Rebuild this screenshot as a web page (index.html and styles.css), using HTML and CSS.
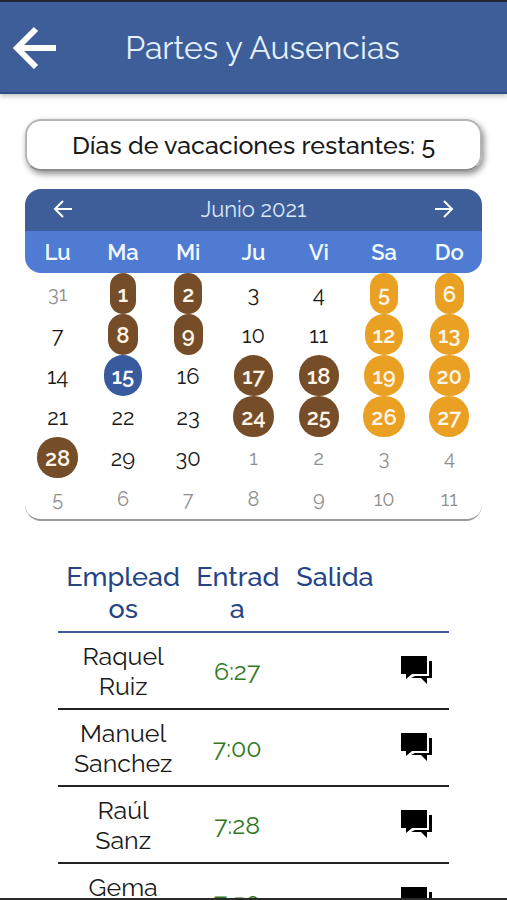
FILE: index.html
```html
<!DOCTYPE html>
<html lang="es">
<head>
    <meta charset="UTF-8">
    <meta name="viewport" content="width=device-width, initial-scale=1.0">
    <title>Partes y Ausencias</title>
    <link rel="stylesheet" href="styles.css">
</head>
<body>
    <svg class="sprite" aria-hidden="true">
        <symbol id="icon-chat" viewBox="0 0 32 29">
            <path d="M1 1h26v18H12l-6 5v-5H1z"/>
            <path d="M29 6h3v17h-5v6l-6-6H11l4-2h14z"/>
        </symbol>
    </svg>

    <div class="app">
        <header class="header">
            <button type="button" class="header__back" aria-label="Volver">
                <svg width="44" height="44" viewBox="0 0 44 44"><path d="M23 4 4 23l19 19M4 23h39"/></svg>
            </button>
            <h1 class="header__title">Partes y Ausencias</h1>
        </header>

        <main class="content">
            <p class="balance">Días de vacaciones restantes: 5</p>

            <section class="calendar">
                <div class="calendar__nav">
                    <button type="button" class="calendar__arrow" aria-label="Mes anterior">
                        <svg width="20" height="20" viewBox="0 0 20 20"><path d="M10 2 2 10l8 8M2 10h17"/></svg>
                    </button>
                    <h2 class="calendar__month">Junio 2021</h2>
                    <button type="button" class="calendar__arrow" aria-label="Mes siguiente">
                        <svg width="20" height="20" viewBox="0 0 20 20"><path d="m10 2 8 8-8 8M18 10H1"/></svg>
                    </button>
                </div>
                <div class="calendar__week">
                    <span>Lu</span><span>Ma</span><span>Mi</span><span>Ju</span><span>Vi</span><span>Sa</span><span>Do</span>
                </div>
                <div class="calendar__days">
                    <button type="button" class="day day--other">31</button>
                    <button type="button" class="day day--absence">1</button>
                    <button type="button" class="day day--absence">2</button>
                    <button type="button" class="day">3</button>
                    <button type="button" class="day">4</button>
                    <button type="button" class="day day--weekend">5</button>
                    <button type="button" class="day day--weekend">6</button>

                    <button type="button" class="day">7</button>
                    <button type="button" class="day day--absence">8</button>
                    <button type="button" class="day day--absence">9</button>
                    <button type="button" class="day">10</button>
                    <button type="button" class="day">11</button>
                    <button type="button" class="day day--weekend">12</button>
                    <button type="button" class="day day--weekend">13</button>

                    <button type="button" class="day">14</button>
                    <button type="button" class="day day--today">15</button>
                    <button type="button" class="day">16</button>
                    <button type="button" class="day day--absence">17</button>
                    <button type="button" class="day day--absence">18</button>
                    <button type="button" class="day day--weekend">19</button>
                    <button type="button" class="day day--weekend">20</button>

                    <button type="button" class="day">21</button>
                    <button type="button" class="day">22</button>
                    <button type="button" class="day">23</button>
                    <button type="button" class="day day--absence">24</button>
                    <button type="button" class="day day--absence">25</button>
                    <button type="button" class="day day--weekend">26</button>
                    <button type="button" class="day day--weekend">27</button>

                    <button type="button" class="day day--absence">28</button>
                    <button type="button" class="day">29</button>
                    <button type="button" class="day">30</button>
                    <button type="button" class="day day--other">1</button>
                    <button type="button" class="day day--other">2</button>
                    <button type="button" class="day day--other">3</button>
                    <button type="button" class="day day--other">4</button>

                    <button type="button" class="day day--other">5</button>
                    <button type="button" class="day day--other">6</button>
                    <button type="button" class="day day--other">7</button>
                    <button type="button" class="day day--other">8</button>
                    <button type="button" class="day day--other">9</button>
                    <button type="button" class="day day--other">10</button>
                    <button type="button" class="day day--other">11</button>
                </div>
            </section>

            <table class="table">
                <colgroup>
                    <col class="table__col--name">
                    <col class="table__col--time">
                    <col class="table__col--time">
                    <col>
                </colgroup>
                <thead>
                    <tr>
                        <th scope="col">Emplead<wbr>os</th>
                        <th scope="col">Entrad<wbr>a</th>
                        <th scope="col">Salida</th>
                        <td></td>
                    </tr>
                </thead>
                <tbody>
                    <tr>
                        <td>Raquel Ruiz</td>
                        <td class="table__time">6:27</td>
                        <td></td>
                        <td><button type="button" class="table__chat" aria-label="Comentarios"><svg width="32" height="29"><use href="#icon-chat"/></svg></button></td>
                    </tr>
                    <tr>
                        <td>Manuel Sanchez</td>
                        <td class="table__time">7:00</td>
                        <td></td>
                        <td><button type="button" class="table__chat" aria-label="Comentarios"><svg width="32" height="29"><use href="#icon-chat"/></svg></button></td>
                    </tr>
                    <tr>
                        <td>Raúl<br>Sanz</td>
                        <td class="table__time">7:28</td>
                        <td></td>
                        <td><button type="button" class="table__chat" aria-label="Comentarios"><svg width="32" height="29"><use href="#icon-chat"/></svg></button></td>
                    </tr>
                    <tr>
                        <td>Gema<br>Ruiz</td>
                        <td class="table__time">7:50</td>
                        <td></td>
                        <td><button type="button" class="table__chat" aria-label="Comentarios"><svg width="32" height="29"><use href="#icon-chat"/></svg></button></td>
                    </tr>
                </tbody>
            </table>
        </main>
    </div>
</body>
</html>
```
FILE: styles.css
```css
:root {
    --color-primary: #3e5e99;
    --color-week: #4f7bd2;
    --color-heading: #244486;
    --color-absence: #754e29;
    --color-weekend: #e9a023;
    --color-today: #385b9e;
    --color-time: #2e7a1c;
    --color-muted: #909090;
    --color-text: #1a1a1a;
}

* {
    box-sizing: border-box;
}

body {
    margin: 0;
    background-color: #fff;
    color: var(--color-text);
    font-family: Raleway, Lato, sans-serif;
    font-variant-numeric: oldstyle-nums;
}

button {
    padding: 0;
    border: none;
    background: none;
    color: inherit;
    font: inherit;
    font-variant-numeric: inherit;
    cursor: pointer;
}

svg {
    display: block;
}

.sprite {
    display: none;
}

.app {
    display: flex;
    flex-direction: column;
    height: 100vh;
    border-top: 2px solid #222831;
    border-bottom: 2px solid #2a2a2a;
}

.header {
    display: grid;
    grid-template-columns: 44px 1fr 26px;
    align-items: center;
    flex-shrink: 0;
    height: 92px;
    padding: 0 13px;
    background-color: var(--color-primary);
    border-bottom: 2px solid #2f5087;
    box-shadow: 0 2px 5px rgba(0, 0, 0, 0.25);
    color: #e4f1ff;
}

.header__back svg {
    fill: none;
    stroke: #fff;
    stroke-width: 6;
}

.header__title {
    margin: 0;
    font-size: 32px;
    font-weight: 400;
    text-align: center;
}

.content {
    flex: 1;
    min-height: 0;
    padding: 25px 25px 0;
    overflow-y: auto;
    scrollbar-width: none;
}

.balance {
    margin: 0 0 18px;
    padding: 8px;
    border: 2px solid #b4b4b4;
    border-bottom-color: #8c8c8c;
    border-radius: 16px;
    box-shadow: 2px 3px 6px rgba(0, 0, 0, 0.45);
    font-size: 25px;
    font-weight: 500;
    line-height: 32px;
    text-align: center;
}

.calendar {
    border-bottom: 2px solid #999;
    border-radius: 16px;
}

.calendar__nav {
    display: flex;
    justify-content: space-between;
    align-items: center;
    height: 42px;
    padding: 0 28px 2px;
    background-color: var(--color-primary);
    border-radius: 16px 16px 0 0;
    color: #dbe8fb;
}

.calendar__arrow svg {
    fill: none;
    stroke: #fff;
    stroke-width: 2;
}

.calendar__month {
    margin: 0;
    font-size: 22px;
    font-weight: 400;
}

.calendar__week,
.calendar__days {
    display: grid;
    grid-template-columns: repeat(7, 1fr);
    justify-items: center;
}

.calendar__week {
    background-color: var(--color-week);
    border-radius: 0 0 16px 16px;
    color: #f2f8ff;
    font-size: 22px;
    font-weight: 600;
    line-height: 42px;
}

.day {
    height: 41px;
    padding: 0 8px;
    border-radius: 20px;
    font-size: 22px;
    font-weight: 400;
}

.day--other {
    color: var(--color-muted);
    font-size: 20px;
}

.day--absence,
.day--weekend,
.day--today {
    color: #fff5e6;
    font-weight: 600;
}

.day--absence {
    background-color: var(--color-absence);
}

.day--weekend {
    background-color: var(--color-weekend);
}

.day--today {
    background-color: var(--color-today);
    color: #fff;
}

.table {
    width: calc(100% - 66px);
    margin: 32px auto 0;
    border-collapse: collapse;
    table-layout: fixed;
    font-size: 25px;
    line-height: 30px;
    text-align: center;
}

.table__col--name {
    width: 33.33%;
}

.table__col--time {
    width: 25%;
}

.table th,
.table td {
    padding: 8px 8px 7px;
    border-bottom: 2px solid #222;
}

.table th,
.table thead td {
    padding-bottom: 6px;
    border-bottom-color: #3f5c98;
}

.table th {
    color: var(--color-heading);
    font-size: 27px;
    font-weight: 500;
    line-height: 32px;
    vertical-align: top;
}

.table .table__time {
    color: var(--color-time);
}

.table__chat {
    display: inline-block;
    padding-bottom: 4px;
    vertical-align: middle;
    color: #000;
}

.table__chat svg {
    fill: currentColor;
}
```
